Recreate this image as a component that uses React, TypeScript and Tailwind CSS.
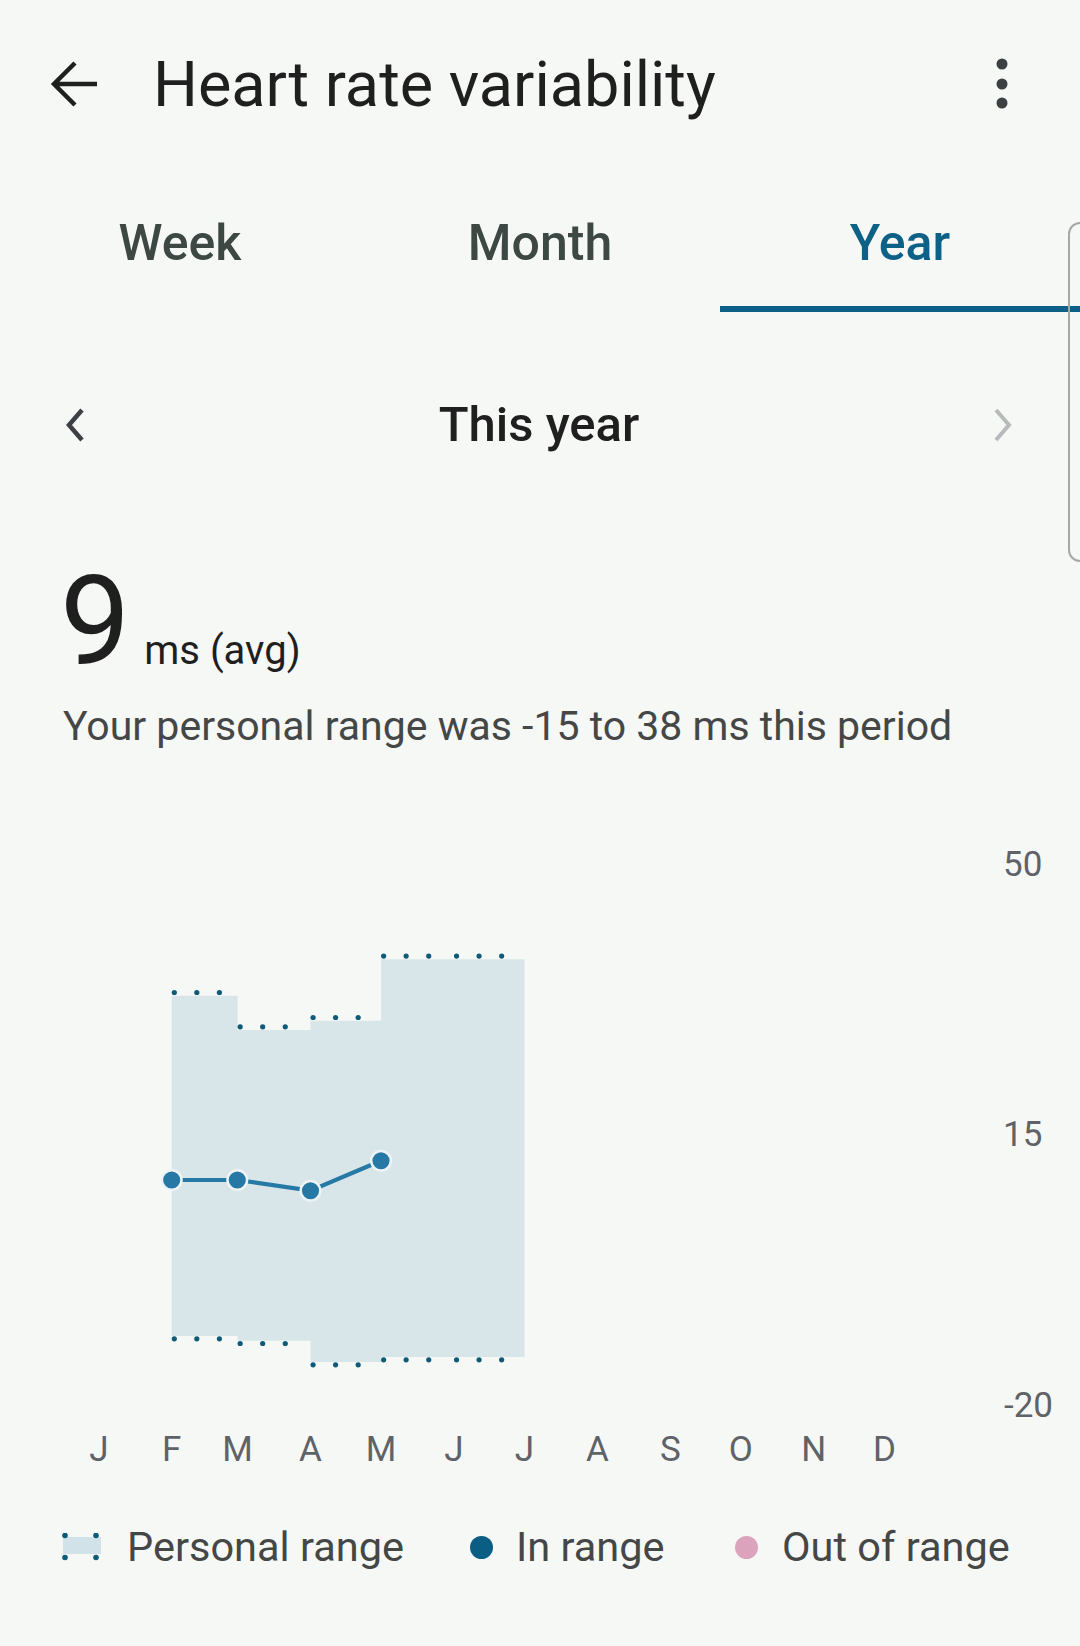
import React from 'react';

const MONTHS = ['J', 'F', 'M', 'A', 'M', 'J', 'J', 'A', 'S', 'O', 'N', 'D'];
const MONTH_START_DAY = [0, 31, 59, 90, 120, 151, 181, 212, 243, 273, 304, 334];
const dayX = (d: number) => 98.8 + 2.352 * d;

// personal range per month (pixel rows, chart-local)
const Y0 = 780;
const ranges = [
    { m: 1, top: 995.7, bottom: 1336 },
    { m: 2, top: 1030, bottom: 1340.7 },
    { m: 3, top: 1020.7, bottom: 1362 },
    { m: 4, top: 959.3, bottom: 1357 },
    { m: 5, top: 959.3, bottom: 1357 },
];

const points = [
    { x: 171.7, y: 1180 },
    { x: 237.3, y: 1180 },
    { x: 310.5, y: 1190.7 },
    { x: 381, y: 1160.7 },
];

const mStart = (m: number) => dayX(MONTH_START_DAY[m]);
const mEnd = (m: number) => (m === 11 ? dayX(365) : dayX(MONTH_START_DAY[m + 1]));

// one outline for the stepped band so no seams show between months
const bandPath = () => {
    let d = '';
    ranges.forEach((r, i) => {
        d += `${i === 0 ? 'M' : 'L'}${mStart(r.m)} ${r.top} L${mEnd(r.m)} ${r.top} `;
    });
    [...ranges].reverse().forEach((r) => {
        d += `L${mEnd(r.m)} ${r.bottom} L${mStart(r.m)} ${r.bottom} `;
    });
    return d + 'Z';
};

const Chart = () => (
    <svg width={1080} height={700} viewBox={`0 ${Y0} 1080 700`} className="block">
        <path d={bandPath()} fill="#d9e6e9" />
        {ranges.map((r) =>
            [2.6, 25.1, 47.7].map((off) => (
                <g key={`${r.m}-${off}`} fill="#0e5b79">
                    <circle cx={mStart(r.m) + off} cy={r.top - 3.2} r={2.6} />
                    <circle cx={mStart(r.m) + off} cy={r.bottom + 2.8} r={2.6} />
                </g>
            ))
        )}
        <polyline
            points={points.map((p) => `${p.x},${p.y}`).join(' ')}
            fill="none"
            stroke="#2679a4"
            strokeWidth={4.2}
        />
        {points.map((p, i) => (
            <circle key={i} cx={p.x} cy={p.y} r={9.8} fill="#2679a4" stroke="#eef4f5" strokeWidth={2.5} />
        ))}
        <g fill="#5f6368" fontSize={35} fontFamily="Roboto, 'Noto Sans', sans-serif">
            <text x={1003} y={876}>50</text>
            <text x={1003} y={1146}>15</text>
            <text x={1004} y={1417}>-20</text>
            {MONTHS.map((m, i) => (
                <text key={i} x={mStart(i)} y={1461} textAnchor="middle">
                    {m}
                </text>
            ))}
        </g>
    </svg>
);

const App = () => {
    return (
        <div
            className="relative w-[1080px] h-[1646px] overflow-hidden bg-[#f6f8f6] text-[#1f1f1f]"
            style={{ fontFamily: 'Roboto, "Noto Sans", sans-serif' }}
        >
            {/* header */}
            <div className="flex items-center h-[168px]">
                <svg width={50} height={46} viewBox="0 0 50 46" className="ml-[50px]">
                    <path d="M47 23H5M25 2L4 23l21 21" fill="none" stroke="#1f1f1f" strokeWidth={4.5} />
                </svg>
                <h1 className="ml-[53px] text-[63px] leading-none font-normal">Heart rate variability</h1>
                <svg width={14} height={54} viewBox="0 0 14 54" className="ml-auto mr-[71px]">
                    <g fill="#3c4043">
                        <circle cx={7} cy={7} r={5.5} />
                        <circle cx={7} cy={27} r={5.5} />
                        <circle cx={7} cy={46} r={5.5} />
                    </g>
                </svg>
            </div>

            {/* tabs */}
            <div className="grid grid-cols-3 h-[144px]">
                {['Week', 'Month', 'Year'].map((t) => {
                    const active = t === 'Year';
                    return (
                        <div key={t} className="flex flex-col">
                            <div
                                className={`flex-1 pt-[12px] flex items-center justify-center text-[50px] font-medium ${
                                    active ? 'text-[#0e6186]' : 'text-[#3d4845]'
                                }`}
                            >
                                {t}
                            </div>
                            <div className={`h-[6px] ${active ? 'bg-[#0e6186]' : ''}`} />
                        </div>
                    );
                })}
            </div>

            {/* period nav */}
            <div className="flex items-center justify-between h-[226px] px-[64px]">
                <svg width={22} height={36} viewBox="0 0 22 36">
                    <path d="M18 3L5 18l13 15" fill="none" stroke="#3c4043" strokeWidth={4.5} />
                </svg>
                <div className="text-[49px] font-medium">This year</div>
                <svg width={22} height={36} viewBox="0 0 22 36" className="mr-[2px]">
                    <path d="M4 3l13 15L4 33" fill="none" stroke="#b6baba" strokeWidth={4} />
                </svg>
            </div>

            {/* value */}
            <div className="flex items-baseline pl-[60px] mt-[21px]">
                <span className="text-[125px] leading-none font-normal">9</span>
                <span className="ml-[14px] text-[40px] leading-none text-[#1f1f1f]">ms (avg)</span>
            </div>
            <p className="mt-[18px] pl-[63px] text-[41px] leading-[48px] text-[#444746]">
                Your personal range was -15 to 38 ms this period
            </p>

            <div className="mt-[30px]">
                <Chart />
            </div>

            {/* legend */}
            <div className="mt-[43px] h-[48px] flex items-center text-[41.5px] text-[#444746]">
                <div className="flex items-center w-[470px] pl-[61px]">
                    <svg width={42} height={28} viewBox="0 0 42 28">
                        <rect x={2} y={4} width={38} height={17} fill="#d2e2e9" />
                        <g fill="#0e5b79">
                            <circle cx={4} cy={2.5} r={2.8} />
                            <circle cx={35} cy={2.5} r={2.8} />
                            <circle cx={4} cy={24.5} r={2.8} />
                            <circle cx={35} cy={24.5} r={2.8} />
                        </g>
                    </svg>
                    <span className="ml-[24px]">Personal range</span>
                </div>
                <div className="flex items-center w-[265px]">
                    <span className="w-[23px] h-[23px] rounded-full bg-[#0b5e83]" />
                    <span className="ml-[23px]">In range</span>
                </div>
                <div className="flex items-center">
                    <span className="w-[23px] h-[23px] rounded-full bg-[#dca3bd]" />
                    <span className="ml-[24px]">Out of range</span>
                </div>
            </div>

            {/* edge panel handle */}
            <div className="absolute left-[1068px] top-[222px] w-[40px] h-[340px] border-2 border-[#a6a8a8] rounded-[12px]" />
        </div>
    );
};

export default App;
